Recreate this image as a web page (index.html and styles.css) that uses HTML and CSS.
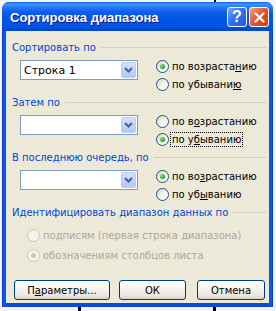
FILE: index.html
```html
<!DOCTYPE html>
<html lang="ru">
<head>
    <meta charset="UTF-8">
    <meta name="viewport" content="width=device-width, initial-scale=1.0">
    <title>Сортировка диапазона</title>
    <link rel="stylesheet" href="styles.css">
</head>
<body>
    <div class="mark mark-top"></div>
    <div class="mark mark-bottom-a"></div>
    <div class="mark mark-bottom-b"></div>

    <div class="window">
        <div class="titlebar">
            <span class="title">Сортировка диапазона</span>
            <div class="tb-btn help">?</div>
            <div class="tb-btn close">
                <svg width="11" height="11" viewBox="0 0 11 11"><path d="M1.5 1.5 L9.5 9.5 M9.5 1.5 L1.5 9.5" stroke="#fff" stroke-width="2.2" stroke-linecap="square"/></svg>
            </div>
        </div>

        <div class="client">
            <div class="group">
                <div class="group-head"><span>Сортировать по</span></div>
                <div class="group-row">
                    <div class="combo">
                        <span class="combo-text">Строка 1</span>
                        <span class="combo-btn"><svg width="9" height="6" viewBox="0 0 9 6"><path d="M1 1 L4.5 4.5 L8 1" fill="none" stroke="#4d6185" stroke-width="2"/></svg></span>
                    </div>
                    <div class="radios">
                        <div class="radio checked"><span class="dot"></span>по возраста<u>н</u>ию</div>
                        <div class="radio"><span class="dot"></span>по убывани<u>ю</u></div>
                    </div>
                </div>
            </div>

            <div class="group">
                <div class="group-head"><span>Затем по</span></div>
                <div class="group-row">
                    <div class="combo">
                        <span class="combo-text"></span>
                        <span class="combo-btn"><svg width="9" height="6" viewBox="0 0 9 6"><path d="M1 1 L4.5 4.5 L8 1" fill="none" stroke="#4d6185" stroke-width="2"/></svg></span>
                    </div>
                    <div class="radios">
                        <div class="radio"><span class="dot"></span>по в<u>о</u>зрастанию</div>
                        <div class="radio checked"><span class="dot"></span><span class="focus">по у<u>б</u>ыванию</span></div>
                    </div>
                </div>
            </div>

            <div class="group">
                <div class="group-head"><span>В последнюю очередь, по</span></div>
                <div class="group-row">
                    <div class="combo">
                        <span class="combo-text"></span>
                        <span class="combo-btn"><svg width="9" height="6" viewBox="0 0 9 6"><path d="M1 1 L4.5 4.5 L8 1" fill="none" stroke="#4d6185" stroke-width="2"/></svg></span>
                    </div>
                    <div class="radios">
                        <div class="radio checked"><span class="dot"></span>по во<u>з</u>растанию</div>
                        <div class="radio"><span class="dot"></span>по уб<u>ы</u>ванию</div>
                    </div>
                </div>
            </div>

            <div class="group">
                <div class="group-head"><span>Идентифицировать диапазон данных по</span></div>
                <div class="ident">
                    <div class="radio disabled"><span class="dot"></span>подписям (первая строка диапазона)</div>
                    <div class="radio disabled checked"><span class="dot"></span>обозначениям столбцов листа</div>
                </div>
            </div>

            <div class="buttons">
                <div class="btn btn-params">П<u>а</u>раметры...</div>
                <div class="btn btn-ok">ОК</div>
                <div class="btn btn-cancel">Отмена</div>
            </div>
        </div>
    </div>
</body>
</html>
```

FILE: styles.css
```css
* {
    box-sizing: border-box;
}
body {
    margin: 0;
    padding: 2px 0 0 2px;
    background: #f4f5f7;
    font-family: "DejaVu Sans", Verdana, sans-serif;
    font-size: 10px;
    color: #000;
    position: relative;
    height: 311px;
    overflow: hidden;
}
.mark {
    position: absolute;
    background: #000;
    width: 2px;
}
.mark-top {
    left: 214px;
    top: 0;
    height: 2px;
}
.mark-bottom-a {
    left: 78px;
    top: 307px;
    height: 4px;
    width: 3px;
}
.mark-bottom-b {
    left: 213px;
    top: 307px;
    height: 4px;
    width: 3px;
}
.window {
    width: 271px;
    height: 305px;
    display: flex;
    flex-direction: column;
    border-radius: 7px 7px 0 0;
    background: linear-gradient(90deg, #0831d9, #1660ee 2px, #0a4ade 4px, #0a4ade 267px, #1660ee 269px, #0831d9);
    overflow: hidden;
}
.titlebar {
    height: 29px;
    flex: none;
    display: flex;
    align-items: center;
    padding: 1px 4px 0 8px;
    background: linear-gradient(#0a5ef0, #3d95ff 2px, #2a7cf8 5px, #0a5ee9 10px, #0055e5 18px, #0054e3 24px, #0046c8);
}
.title {
    flex: 1;
    color: #fff;
    font: bold 13px "Liberation Sans", Arial, sans-serif;
    text-shadow: 1px 1px 0 #0a1a8c;
}
.tb-btn {
    width: 20px;
    height: 20px;
    border: 1px solid #fff;
    border-radius: 3px;
    display: flex;
    align-items: center;
    justify-content: center;
}
.help {
    margin-right: 2px;
    background: linear-gradient(135deg, #7aa6fa, #3572ec 45%, #2156de);
    color: #fff;
    font: bold 16px "Liberation Sans", Arial, sans-serif;
}
.close {
    background: linear-gradient(135deg, #f4a07c, #e2542b 50%, #c83c14);
}
.client {
    flex: 1;
    margin: 0 4px 4px;
    background: #ece9d8;
    padding: 10px 3px 0 6px;
}
.group + .group {
    margin-top: 3px;
}
.group-head {
    display: flex;
    align-items: center;
    height: 12px;
    color: #0046d5;
}
.group-head::after {
    content: "";
    flex: 1;
    height: 1px;
    margin-left: 5px;
    background: #d0d0bf;
}
.group-row {
    display: flex;
    margin-top: 4px;
}
.combo {
    width: 118px;
    height: 20px;
    margin: 3px 0 0 8px;
    border: 1px solid #7f9db9;
    background: #fff;
    display: flex;
    align-items: center;
    padding: 1px;
}
.combo-text {
    flex: 1;
    padding-left: 2px;
    font-size: 11px;
}
.combo-btn {
    width: 15px;
    height: 16px;
    border: 1px solid #b9cdf7;
    border-radius: 2px;
    background: linear-gradient(#d4e0fd, #c1d3fb 50%, #b2c7f7);
    display: flex;
    align-items: center;
    justify-content: center;
}
.radios {
    margin-left: 18px;
}
.radio {
    display: flex;
    align-items: center;
    height: 18px;
    white-space: nowrap;
}
.dot {
    width: 13px;
    height: 13px;
    flex: none;
    border-radius: 50%;
    border: 1px solid #1c5180;
    background: linear-gradient(135deg, #d6d3c8, #f3f2ec 50%, #fff);
    margin-right: 3px;
    display: flex;
    align-items: center;
    justify-content: center;
}
.checked .dot::after {
    content: "";
    width: 5px;
    height: 5px;
    border-radius: 50%;
    background: radial-gradient(circle at 35% 35%, #8ee68e, #2bb02b 55%, #118d11);
}
.focus {
    outline: 1px dotted #000;
    outline-offset: 1px;
}
.ident {
    margin: 7px 0 0 15px;
}
.ident .radio {
    height: 20px;
}
.radio.disabled {
    color: #aca899;
}
.disabled .dot {
    border-color: #cac8bb;
    background: #f4f3ee;
}
.disabled.checked .dot::after {
    background: #cac8bb;
}
.buttons {
    display: flex;
    margin: 15px 0 0 2px;
}
.btn {
    height: 20px;
    border: 1px solid #003c74;
    border-radius: 3px;
    background: linear-gradient(#fff, #f6f5f1 40%, #e9e7e0 80%, #d8d2c6);
    display: flex;
    align-items: center;
    justify-content: center;
}
.btn-params {
    width: 96px;
}
.btn-ok {
    width: 67px;
    margin-left: 9px;
}
.btn-cancel {
    width: 68px;
    margin-left: 11px;
}
```
